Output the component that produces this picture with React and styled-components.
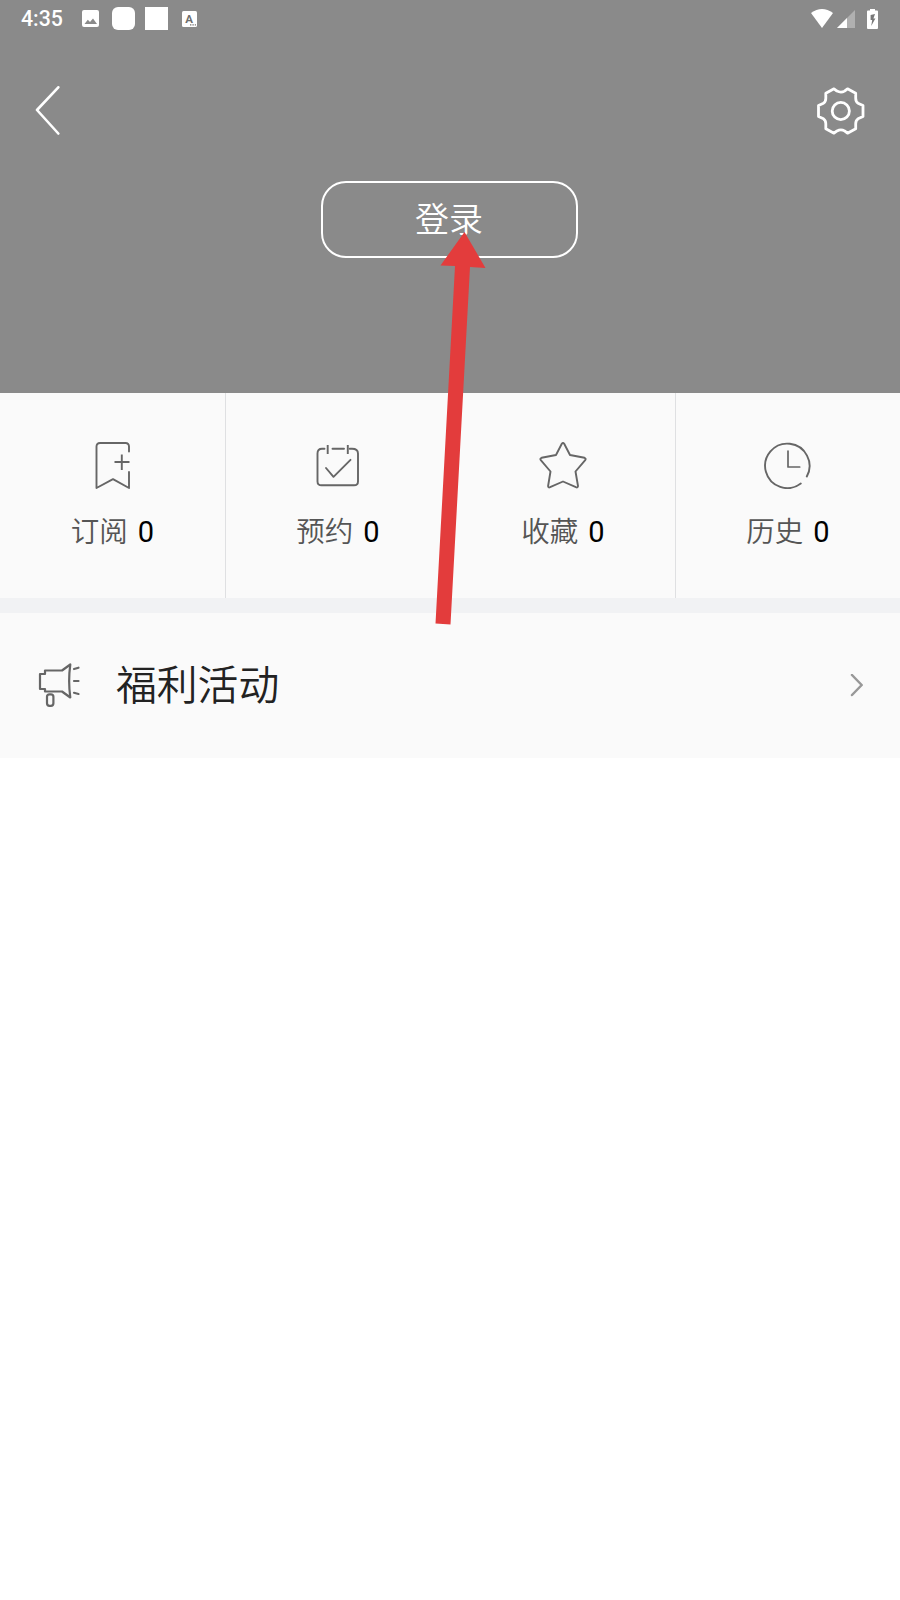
import styled, { createGlobalStyle } from "styled-components";

const GlobalStyle = createGlobalStyle`
  * {
    box-sizing: border-box;
  }
  body {
    margin: 0;
    background: #ffffff;
    font-family: Roboto, "Noto Sans CJK SC", sans-serif;
  }
`;

const Page = styled.div`
  position: relative;
  width: 900px;
  height: 1600px;
  overflow: hidden;
  background: #ffffff;
`;

const Header = styled.header`
  display: flex;
  flex-direction: column;
  height: 393px;
  background: #8a8a8a;
  color: #ffffff;
`;

const StatusBar = styled.div`
  display: flex;
  justify-content: space-between;
  align-items: center;
  height: 37px;
  padding: 0 22px 0 21px;
`;

const StatusGroup = styled.div`
  display: flex;
  align-items: center;
`;

const Time = styled.span`
  width: 61px;
  font-size: 21.3px;
  font-weight: 500;
  line-height: 37px;
`;

const Block = styled.span`
  width: 23px;
  height: 23px;
  margin-left: ${(props) => props.$gap}px;
  border-radius: ${(props) => props.$radius}px;
  background: #ffffff;
`;

const Icon = styled.svg`
  display: block;
  flex: none;
  fill: none;
  stroke: ${(props) => props.$color || "#666666"};
  stroke-width: ${(props) => props.$line || 2};
  stroke-linecap: round;
  stroke-linejoin: round;
  margin-left: ${(props) => props.$gap || 0}px;
`;

const NavBar = styled.nav`
  display: flex;
  justify-content: space-between;
  align-items: center;
  height: 146px;
  padding: 1px 35px 0 34px;
`;

const IconButton = styled.button`
  padding: 0;
  border: none;
  background: none;
`;

const LoginButton = styled.button`
  align-self: center;
  width: 257px;
  height: 77px;
  margin-top: -2px;
  margin-right: 1px;
  padding: 0 1px 0 0;
  border: 2px solid #ffffff;
  border-radius: 25px;
  background: none;
  color: #ffffff;
  font-family: inherit;
  font-size: 34px;
  font-weight: 350;
  line-height: 40px;
`;

const Stats = styled.section`
  display: grid;
  grid-template-columns: repeat(4, 1fr);
  height: 205px;
  background: #fafafa;
`;

const Stat = styled.div`
  display: flex;
  flex-direction: column;
  align-items: center;
  padding-top: 48px;
  border-left: 1px solid #dfe0e2;

  &:first-child {
    border-left: none;
  }
`;

const StatLabel = styled.div`
  display: flex;
  align-items: baseline;
  gap: 10px;
  margin-top: 23px;
  color: #555555;
  font-size: 28.5px;
  font-weight: 350;
  line-height: 40px;
`;

const Count = styled.span`
  color: #000000;
  font-size: 29px;
  font-weight: 400;
`;

const Divider = styled.div`
  height: 15px;
  background: #f1f2f4;
`;

const MenuRow = styled.div`
  display: flex;
  align-items: center;
  height: 145px;
  padding: 0 36px 0 35px;
  background: #fafafa;
`;

const MenuTitle = styled.span`
  flex: 1;
  margin-left: 33px;
  color: #222222;
  font-size: 40.8px;
  font-weight: 350;
  line-height: 60px;
`;

const Pointer = styled.svg`
  position: absolute;
  left: 430px;
  top: 230px;
  fill: #e33c3c;
`;

const stats = [
  {
    label: "订阅",
    icon: (
      <>
        <path d="M40 10.5V5.5Q40 2 36.5 2H11Q7.5 2 7.5 5.5V47L24 38.2L40 47V31" />
        <path d="M25.5 21H40.5M32.8 13.5V29" strokeLinecap="butt" />
      </>
    ),
  },
  {
    label: "预约",
    icon: (
      <>
        <path d="M35.7 7.8H38Q44 7.8 44 12.5V40.5Q44 44.3 40 44.3H7.5Q3.5 44.3 3.5 40.5V12.5Q3.5 7.8 8 7.8H10.5M18.5 7.8H30" />
        <path d="M13.7 4V13M33.8 4V13" strokeLinecap="butt" />
        <path d="M12 27L19.5 35.8L36.5 18.8" />
      </>
    ),
  },
  {
    label: "收藏",
    icon: (
      <path d="M22.8 2.8Q24 1.2 25.2 2.8L31 14L45.5 16.8Q47.4 17.6 46.2 19.2L36.5 30.5L39 45Q38.9 47 36.9 46.2L24 40.5L11.1 46.2Q9.1 47 9.1 45L11.5 30.5L1.8 19.2Q.6 17.6 2.6 16.8L17 14Z" />
    ),
  },
  {
    label: "历史",
    icon: (
      <>
        <path d="M42.8 35.5A22.2 22.2 0 1 0 36.8 42.5" />
        <path d="M24 10V26H35.7" strokeWidth="1.7" />
      </>
    ),
  },
];

function App() {
  return (
    <Page>
      <GlobalStyle />
      <Header>
        <StatusBar>
          <StatusGroup>
            <Time>4:35</Time>
            <Icon width="17" height="17" viewBox="0 0 17 17" $color="none">
              <path
                fill="#fff"
                fillRule="evenodd"
                d="M2 0H15Q17 0 17 2V15Q17 17 15 17H2Q0 17 0 15V2Q0 0 2 0ZM2.5 14H15L11 8.5L8 12L5.8 9.8Z"
              />
            </Icon>
            <Block $gap={13} $radius={6} />
            <Block $gap={10} $radius={0} />
            <Icon width="15" height="16" viewBox="0 0 15 16" $gap={14} $color="none">
              <rect width="15" height="16" rx="1.5" fill="#fff" />
              <text
                x="7.2"
                y="12"
                fill="#6e6e6e"
                fontSize="11.5"
                fontWeight="700"
                textAnchor="middle"
              >
                A
              </text>
              <path d="M8 13.2H9.4V14.6H8ZM10.4 13.2H11.8V14.6H10.4ZM12.8 13.2H14V14.6H12.8Z" fill="#777" />
            </Icon>
          </StatusGroup>
          <StatusGroup>
            <Icon width="22" height="19" viewBox="0 0 22 19" $color="none">
              <path d="M0 4Q11-4 22 4L11 19Z" fill="#fff" />
            </Icon>
            <Icon width="18" height="18" viewBox="0 0 18 18" $gap={4} $color="none">
              <path d="M18 0V18H0Z" fill="#b0b0b0" />
              <path d="M10 8V18H0Z" fill="#fff" />
            </Icon>
            <Icon width="11" height="20" viewBox="0 0 11 20" $gap={12} $color="none">
              <path
                fill="#fff"
                d="M3 0H8V1.5H10Q11 1.5 11 2.5V19Q11 20 10 20H1Q0 20 0 19V2.5Q0 1.5 1 1.5H3Z"
              />
              <path d="M8 5L3.6 6V11H5.2L4.2 17L8.4 9.6H6.4Z" fill="#777" />
            </Icon>
          </StatusGroup>
        </StatusBar>
        <NavBar>
          <IconButton>
            <Icon width="26" height="50" viewBox="0 0 26 50" $color="#fff" $line={2.6}>
              <path d="M24.3 1.3L3 24L24.3 47.5" />
            </Icon>
          </IconButton>
          <IconButton>
            <Icon width="48" height="48" viewBox="0 0 48 48" $color="#fff" $line={2.8}>
              <path d="M17 1.8L20 4.1Q24 6.1 27.5 4.1L30.5 1.8L38.7 6.3V11.2Q38.7 14.5 41 16.2L46 18.5V29.5L41 31.8Q38.7 33.5 38.7 36.8V41.7L30.5 46.2L27.5 43.9Q24 41.9 20 43.9L17 46.2L8.8 41.7V36.8Q8.8 33.5 6.5 31.8L1.5 29.5V18.5L6.5 16.2Q8.8 14.5 8.8 11.2V6.3Z" />
              <circle cx="23.8" cy="24" r="8.6" />
            </Icon>
          </IconButton>
        </NavBar>
        <LoginButton>登录</LoginButton>
      </Header>

      <Stats>
        {stats.map((item) => (
          <Stat key={item.label}>
            <Icon width="48" height="48" viewBox="0 0 48 48" $line={1.9}>
              {item.icon}
            </Icon>
            <StatLabel>
              {item.label}
              <Count>0</Count>
            </StatLabel>
          </Stat>
        ))}
      </Stats>
      <Divider />
      <MenuRow>
        <Icon width="48" height="48" viewBox="0 0 48 48" $line={2.2}>
          <path d="M35.3 2.5Q33 19 35.3 35.5L27 29.5H10V27H5V12H10V8.5H27Z" />
          <rect x="12" y="32.3" width="6.4" height="11.5" rx="2.5" />
          <path d="M39 7L43.5 5.7M39 19H43.5M39 30.8L43.5 32" />
        </Icon>
        <MenuTitle>福利活动</MenuTitle>
        <Icon width="15" height="24" viewBox="0 0 15 24" $color="#989898" $line={2.5}>
          <path d="M3 1L12.7 11L3 21" />
        </Icon>
      </MenuRow>

      <Pointer width="60" height="400" viewBox="0 0 60 400">
        <path d="M34.5 2L55.5 38L40 37L20.5 394.5L5.5 393.5L25 36L10.5 35.5Z" />
      </Pointer>
    </Page>
  );
}

export default App;
